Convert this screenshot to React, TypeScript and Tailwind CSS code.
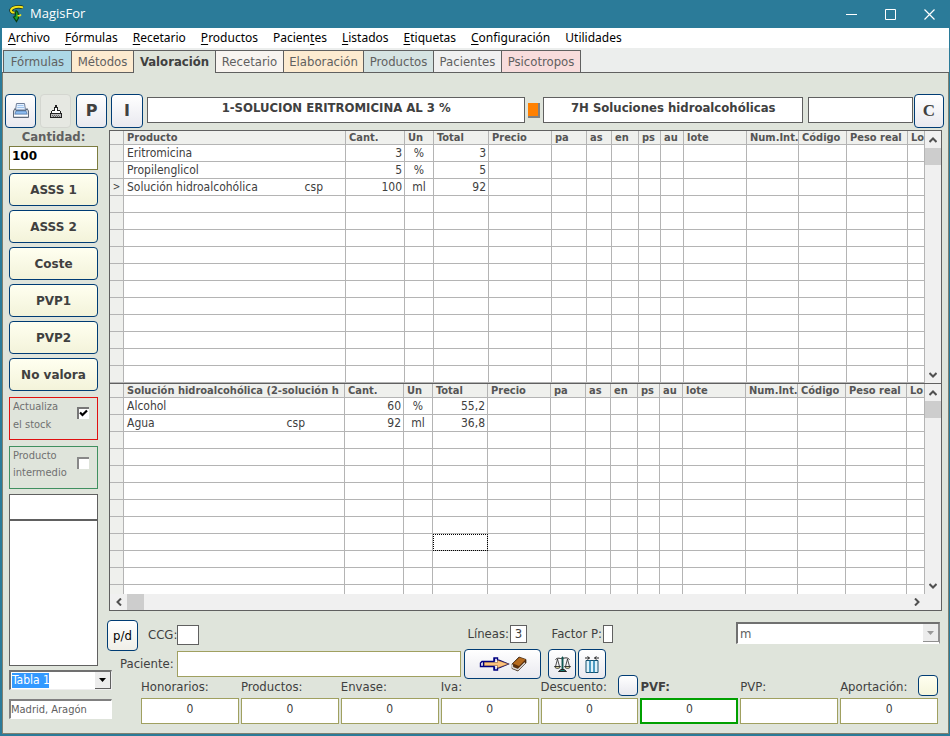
import React from "react";

type Line = { mark?: string; name: string; csp?: boolean; cant: string; un: string; total: string };

const menus = [
    ["", "A", "rchivo"],
    ["", "F", "órmulas"],
    ["", "R", "ecetario"],
    ["", "P", "roductos"],
    ["Pacien", "t", "es"],
    ["", "L", "istados"],
    ["", "E", "tiquetas"],
    ["", "C", "onfiguración"],
    ["Utilidades", "", ""],
];

const tabs = [
    { name: "Fórmulas", style: "w-[69px] border-l bg-[#add8e6]" },
    { name: "Métodos", style: "w-[62px] bg-[#fdebd0]" },
    { name: "Valoración", style: "w-[82px] bg-[#dfe4db] font-bold text-[#404040]", active: true },
    { name: "Recetario", style: "w-[68px] bg-[#f8f4f0]" },
    { name: "Elaboración", style: "w-[80px] bg-[#fdebd0]" },
    { name: "Productos", style: "w-[70px] bg-[#d5e3e2]" },
    { name: "Pacientes", style: "w-[68px] bg-[#f0f0f0]" },
    { name: "Psicotropos", style: "w-[79px] bg-[#f8dcdc]" },
];

const columns = [
    { name: "Cant.", width: "w-[59px]" },
    { name: "Un", width: "w-[29px]" },
    { name: "Total", width: "w-[55px]" },
    { name: "Precio", width: "w-[63px]" },
    { name: "pa", width: "w-[35px]" },
    { name: "as", width: "w-[25px]" },
    { name: "en", width: "w-[27px]" },
    { name: "ps", width: "w-[22px]" },
    { name: "au", width: "w-[23px]" },
    { name: "lote", width: "w-[63px]" },
    { name: "Num.Int.", width: "w-[52px]" },
    { name: "Código", width: "w-[48px]" },
    { name: "Peso real", width: "w-[61px]" },
    { name: "Lo", width: "" },
];

const formulaLines: Line[] = [
    { name: "Eritromicina", cant: "3", un: "%", total: "3" },
    { name: "Propilenglicol", cant: "5", un: "%", total: "5" },
    { mark: ">", name: "Solución hidroalcohólica", csp: true, cant: "100", un: "ml", total: "92" },
];

const baseLines: Line[] = [
    { name: "Alcohol", cant: "60", un: "%", total: "55,2" },
    { name: "Agua", csp: true, cant: "92", un: "ml", total: "36,8" },
];

const actions = ["ASSS 1", "ASSS 2", "Coste", "PVP1", "PVP2", "No valora"];

const totals = [
    { name: "Honorarios:", value: "0" },
    { name: "Productos:", value: "0" },
    { name: "Envase:", value: "0" },
    { name: "Iva:", value: "0" },
    { name: "Descuento:", value: "0", button: "from-white to-[#e8e8ee]" },
    { name: "PVF:", value: "0", strong: true },
    { name: "PVP:", value: "" },
    { name: "Aportación:", value: "0", button: "from-[#fffff0] to-[#f5f5dc]" },
];

const toolButton = "flex items-center justify-center rounded-[4px] border border-[#003c74] bg-linear-to-b from-white to-[#e9e9ef]";
const cell = "border-r border-b border-[#b4b4b4] p-0";
const headCell = "overflow-hidden pt-px pl-[3px] whitespace-nowrap";

const Chevron = ({ d }: { d: string }) => (
    <svg width="8" height="8" viewBox="0 0 8 8" fill="none" stroke="#505050" strokeWidth="2">
        <path d={d} />
    </svg>
);

const Logo = () => (
    <svg width="17" height="18" viewBox="0 0 17 18" fill="none">
        <path d="M15 2.500C11 1 4 2 3 5c-.2 2 1.500 2.800 3.500 2.500" stroke="#1b2a10" strokeWidth="3.400" />
        <path d="M8 5.500c3 1 2 4 2.500 7.500l-2 3.500-3-4.500 1.500-.5z" fill="#19a32c" stroke="#0b3f12" strokeWidth="1.200" />
        <path d="M15 2.500C11 1 4 2 3 5c-.2 2 1.500 2.800 3.500 2.500" stroke="#f2e51c" strokeWidth="2" />
        <path d="M13 9.500c-1 1.500-2 1.500-3.500 1" stroke="#f2e51c" strokeWidth="1.500" />
    </svg>
);

const PrinterIcon = () => (
    <svg width="18" height="18" viewBox="0 0 18 18">
        <path d="M4.500 1.500h8l1 6.500h-10z" fill="#e4f0ff" stroke="#6f7f9a" />
        <path d="M5.500 3.500h6M5.300 5.500h7" stroke="#9fc4ee" />
        <path d="M3 6.500 1.500 9v6.500h15V9L15 6.500l-1 2H4z" fill="#cfd6df" stroke="#5f6a7a" />
        <path d="M4 9h10l1 3H3z" fill="#8ebdf0" stroke="#4d78b0" strokeWidth=".7" />
        <path d="M2 13.500h14" stroke="#fff" />
    </svg>
);

const LoadIcon = () => (
    <svg width="14" height="15" viewBox="0 0 14 15" shapeRendering="crispEdges">
        <path d="M5.500 3.500h1v-2h1v2h1v3h2l2 3h-11l2-3h2z" fill="#fff" stroke="#222" />
        <path d="M1.500 9.500h11v4h-11z" fill="#b8b8b8" stroke="#222" />
        <path d="M3 11.500h8M4 12.500h8" stroke="#666" strokeDasharray="1 1" />
    </svg>
);

const TransferIcon = () => (
    <svg width="48" height="18" viewBox="0 0 48 18">
        <path d="M1.500 8 3 6.500h12V3h3.500v2l2 .5L29 9l-8.500 3.500-2 .5v2H15v-3.500H1.500z" fill="#fff" stroke="#000080" strokeWidth="1.400" />
        <path d="M5 7.500h13.500V5.200L29.500 9 18.500 13v-2.500H5z" fill="#fdc27c" stroke="#704020" strokeWidth=".5" />
        <path d="M4.500 7v4M15.500 3v3.500M15.500 11.500V15" stroke="#000080" strokeWidth="1.400" />
        <path d="m33 9 7-7 7 2.500v3.500l-8 8-6-2.500z" fill="#5a300c" stroke="#2d1a08" strokeWidth=".7" />
        <path d="m34 8.500 6.500-6 6 2L40 11z" fill="#b56b1e" />
        <path d="M33.500 9.500c-1 2 0 3 1 3.500l4.500 1.700 7-7" fill="none" stroke="#d8d8d8" strokeWidth="1.500" />
    </svg>
);

const ScaleIcon = () => (
    <svg width="17" height="17" viewBox="0 0 17 17" fill="none" stroke="#222">
        <path d="M1.500 3.500C4 1 6 3 8.500 2.500S13 1 15.500 3.500" />
        <path d="M3.500 3 1.500 10.500M3.500 3l2 7.500M13.500 3l-2 7.500M13.500 3l2 7.500" strokeWidth=".8" />
        <path d="M.5 10.500h6c-1 2.500-5 2.500-6 0zM10.500 10.500h6c-1 2.500-5 2.500-6 0z" fill="#eee9a8" strokeWidth=".9" />
        <path d="M8 1h1v13H8z" fill="#137a72" stroke="#0d4a46" strokeWidth=".9" />
        <path d="M4.500 15.500h8l-2.500-2H7z" fill="#137a72" />
    </svg>
);

const ColumnsIcon = () => (
    <svg width="16" height="17" viewBox="0 0 16 17" fill="none">
        <path d="M2 4.500h12v12H2z" fill="#dff3fb" stroke="#14506e" />
        <path d="M6 4.500v12M10 4.500v12" stroke="#1d7fae" strokeWidth="1.500" />
        <path d="M1 2h4.500M15 2h-4.500M3.500.5 5.500 2l-2 1.500M12.500.5l-2 1.500 2 1.500" stroke="#222" />
    </svg>
);

const VerticalBar = () => (
    <div className="flex w-4 shrink-0 flex-col items-center bg-[#f0f0f0]">
        <button aria-label="Subir" className="flex h-[17px] w-full items-center justify-center">
            <Chevron d="M.5 6L4 2.500L7.500 6" />
        </button>
        <div className="h-[17px] w-full bg-[#cdcdcd]" />
        <button aria-label="Bajar" className="mt-auto flex h-[17px] w-full items-center justify-center">
            <Chevron d="M.5 2L4 5.500L7.500 2" />
        </button>
    </div>
);

type GridProps = {
    title: string;
    titleWidth: string;
    cspPad: string;
    lines: Line[];
    rows: number;
    focusRow?: number;
};

const LinesTable: React.FC<GridProps> = ({ title, titleWidth, cspPad, lines, rows, focusRow }) => (
    <table className="w-full table-fixed border-separate border-spacing-0 text-[12px] leading-4 text-[#404040]">
        <thead>
            <tr className="h-[14px] bg-[#eff0ed] text-left text-[11px] leading-3 text-[#555]">
                <th className={`${cell} w-[14px]`}></th>
                <th className={`${cell} ${headCell} ${titleWidth}`}>{title}</th>
                {columns.map((col) => (
                    <th key={col.name} className={`${cell} ${headCell} ${col.width}`}>
                        {col.name}
                    </th>
                ))}
            </tr>
        </thead>
        <tbody>
            {Array.from({ length: rows }, (_, i) => {
                const line = lines[i];
                return (
                    <tr key={i} className="h-[17px] bg-white">
                        <td className={`${cell} bg-[#eff0ed] text-center text-[10px]`}>{line?.mark}</td>
                        <td className={`${cell} pl-[3px]`}>
                            {line && (
                                <div className={`flex justify-between ${cspPad}`}>
                                    <span>{line.name}</span>
                                    {line.csp && <span>csp</span>}
                                </div>
                            )}
                        </td>
                        <td className={`${cell} pr-[2px] text-right`}>{line?.cant}</td>
                        <td className={`${cell} text-center`}>{line?.un}</td>
                        <td
                            className={`${cell} pr-[2px] text-right ${focusRow === i ? "outline-1 -outline-offset-1 outline-dotted outline-black" : ""}`}
                        >
                            {line?.total}
                        </td>
                        {columns.slice(3).map((col) => (
                            <td key={col.name} className={cell}></td>
                        ))}
                    </tr>
                );
            })}
        </tbody>
    </table>
);

const Sidebar = () => (
    <aside className="flex w-[98px] shrink-0 flex-col">
        <label htmlFor="cantidad" className="w-[89px] text-center text-[13px] leading-[18px] font-bold text-[#606060]">
            Cantidad:
        </label>
        <input
            id="cantidad"
            defaultValue="100"
            className="h-6 w-[89px] border border-[#7c7c40] bg-white px-[2px] pb-1 font-[DejaVu_Sans] text-[12px] font-bold text-black"
        />
        <div className="mt-[3px] flex w-[89px] flex-col gap-1">
            {actions.map((name) => (
                <button
                    key={name}
                    className="h-[33px] rounded-[4px] border border-[#003c74] bg-linear-to-b from-[#fffff0] to-[#f3f3da] font-[DejaVu_Sans] text-[12px] font-bold text-[#404040]"
                >
                    {name}
                </button>
            ))}
        </div>
        <label className="mt-[6px] flex h-[43px] w-[89px] justify-between border border-[#e01010] pr-[8px] pl-[3px] text-[11px] leading-[18px] text-[#707070]">
            <span>Actualiza<br />el stock</span>
            <span className="relative mt-[9px] size-[12px]">
                <input type="checkbox" defaultChecked className="block size-[12px] appearance-none border-t-2 border-l-2 border-[#777] bg-white" />
                <svg className="pointer-events-none absolute top-[2px] left-[2px]" width="9" height="9" viewBox="0 0 9 9">
                    <path d="M1 3.500 3.500 6 8 1.500" fill="none" stroke="#000" strokeWidth="2.200" />
                </svg>
            </span>
        </label>
        <label className="mt-[6px] flex h-[43px] w-[89px] justify-between border border-[#409060] pr-[8px] pl-[3px] text-[11px] leading-[17px] text-[#707070]">
            <span>Producto<br />intermedio</span>
            <input type="checkbox" className="mt-[10px] size-[12px] appearance-none border-t-2 border-l-2 border-[#888] bg-white" />
        </label>
        <input aria-label="Código" className="mt-[5px] h-[26px] w-[89px] border border-[#606060] bg-white px-1 text-[12px]" />
        <textarea aria-label="Notas" className="h-[146px] w-[89px] resize-none border border-[#606060] bg-white" />
        <div className="mt-1 flex h-[20px] w-[103px] items-center border-t-2 border-r border-b border-l-2 border-t-[#707070] border-r-[#eee] border-b-[#eee] border-l-[#707070] bg-white pl-[1px]">
            <select aria-label="Tabla" className="h-[15px] w-[37px] appearance-none bg-[#3399ff] p-0 text-[12px] leading-[15px] text-white">
                <option>Tabla 1</option>
            </select>
            <span className="ml-auto flex h-full w-4 items-center justify-center border-r border-b border-[#606060] bg-[#ececec]">
                <svg width="7" height="4" viewBox="0 0 7 4"><path d="M0 0h7L3.500 4z" /></svg>
            </span>
        </div>
        <input
            aria-label="Provincia"
            defaultValue="Madrid, Aragón"
            className="mt-[9px] h-[20px] w-[103px] border-t-2 border-r border-b border-l-2 border-t-[#808080] border-r-white border-b-white border-l-[#808080] bg-white text-[11px] text-[#606060]"
        />
    </aside>
);

const Footer = () => (
    <footer className="mr-[8px] text-[13px] text-[#404040]">
        <div className="flex h-[29px] items-start pt-[5px]">
            <button className="-mt-[5px] mr-[10px] h-[31px] w-[31px] shrink-0 rounded-[4px] border border-[#003c74] bg-linear-to-b from-white to-[#f0efe8] text-[13px] text-black">
                p/d
            </button>
            <label htmlFor="ccg" className="w-[29px] leading-5">CCG:</label>
            <input id="ccg" className="h-5 w-[22px] border border-[#606060] bg-white" />
            <label htmlFor="lineas" className="ml-auto pr-px leading-[18px]">Líneas:</label>
            <input id="lineas" defaultValue="3" className="h-[18px] w-[17px] border border-[#606060] bg-white text-center" />
            <label htmlFor="factor" className="w-[76px] pr-px text-right leading-[18px]">Factor P:</label>
            <input id="factor" className="h-[18px] w-[10px] border border-[#606060] bg-white" />
            <div className="relative -mt-[3px] ml-[123px] w-[204px]">
                <select
                    aria-label="Unidad"
                    className="block h-[22px] w-full appearance-none border-t-2 border-r border-b border-l-2 border-t-[#707070] border-r-[#909090] border-b-white border-l-[#707070] bg-white pb-px pl-[2px] text-[#606060]"
                >
                    <option>m</option>
                </select>
                <span className="pointer-events-none absolute top-[2px] right-px flex h-[18px] w-4 items-center justify-center border-r border-b border-[#909090] bg-[#ececec]">
                    <svg width="7" height="4" viewBox="0 0 7 4" fill="#999"><path d="M0 0h7L3.500 4z" /></svg>
                </span>
            </div>
        </div>
        <div className="flex h-[30px] items-center pl-[13px]">
            <label htmlFor="paciente" className="w-[57px] shrink-0">Paciente:</label>
            <input id="paciente" className="h-[26px] flex-1 border border-[#a0a060] bg-white px-1" />
            <button aria-label="Traspasar" className={`${toolButton} ml-[3px] h-[30px] w-[77px]`}><TransferIcon /></button>
            <button aria-label="Pesar" className={`${toolButton} ml-[7px] h-[30px] w-7`}><ScaleIcon /></button>
            <button aria-label="Columnas" className={`${toolButton} mr-[334px] ml-[2px] h-[30px] w-7`}><ColumnsIcon /></button>
        </div>
        <div className="mr-[2px] ml-[34px] grid grid-cols-8 gap-x-[2px]">
            {totals.map((t) => (
                <div key={t.name}>
                    <div className="flex h-[19px] items-end justify-between pb-[2px]">
                        <label
                            htmlFor={t.name}
                            className={t.strong ? "leading-[18px] font-bold" : "leading-[18px]"}
                        >
                            {t.name}
                        </label>
                        {t.button && (
                            <button
                                aria-label={`Editar ${t.name}`}
                                className={`h-[21px] w-[20px] shrink-0 rounded-[4px] border border-[#003c74] bg-linear-to-b ${t.button}`}
                            />
                        )}
                    </div>
                    <input
                        id={t.name}
                        defaultValue={t.value}
                        className={`block h-[26px] w-full bg-white pb-[5px] text-center text-[12px] ${t.strong ? "border-2 border-[#00a000]" : "border border-[#a0a060]"}`}
                    />
                </div>
            ))}
        </div>
    </footer>
);

const App: React.FC = () => {
    return (
        <div className="flex min-h-screen flex-col border-r border-b-2 border-l-2 border-[#2b7b99] bg-[#dfe4db] font-['DejaVu_Sans_Condensed','DejaVu_Sans',sans-serif]">
            <header className="flex h-7 items-center bg-[#2b7b99] pl-[6px] font-['Open_Sans','Noto_Sans',sans-serif] text-[13px] text-white">
                <Logo />
                <span className="ml-[5px]">MagisFor</span>
                <div className="ml-auto flex">
                    <button aria-label="Minimizar" className="w-[39px]">
                        <svg width="11" height="11" className="mx-auto" stroke="#fff"><path d="M0 5.500h11" /></svg>
                    </button>
                    <button aria-label="Maximizar" className="w-[39px]">
                        <svg width="11" height="11" className="mx-auto" stroke="#fff" fill="none"><path d="M.5.5h10v10H.5z" /></svg>
                    </button>
                    <button aria-label="Cerrar" className="w-[39px]">
                        <svg width="11" height="11" className="mx-auto" stroke="#fff" strokeWidth="1.200"><path d="M.5.5l10 10M10.500.5l-10 10" /></svg>
                    </button>
                </div>
            </header>
            <nav className="flex h-5 items-center gap-[15px] bg-white pl-[6px] font-['Noto_Sans',sans-serif] text-[12px] text-black">
                {menus.map(([before, key, after]) => (
                    <button key={before + key + after}>
                        {before}
                        <span className="underline underline-offset-2">{key}</span>
                        {after}
                    </button>
                ))}
            </nav>
            <div className="flex h-[25px] items-end border-b border-[#606060] bg-[#eceeed] pl-px">
                {tabs.map((tab) => (
                    <button
                        key={tab.name}
                        className={`${tab.style} ${tab.active ? "-mb-px h-[23px] pb-px" : "h-[22px] text-[#606060]"} border-t border-r border-[#606060] text-[13px]`}
                    >
                        {tab.name}
                    </button>
                ))}
            </div>
            <main className="flex-1 border-x border-b border-[#808070] pb-[8px]">
                <div className="flex items-start pt-[21px] pr-1 pl-[2px] text-[12px] font-bold text-[#404040]">
                    <button aria-label="Imprimir" className={`${toolButton} h-[34px] w-[31px]`}><PrinterIcon /></button>
                    <button aria-label="Cargar" className="ml-1 flex h-[34px] w-[31px] items-center justify-center rounded-[4px] border border-[#d4d6d0] bg-[#e6e8e2]"><LoadIcon /></button>
                    <button className={`${toolButton} ml-[5px] h-[34px] w-[31px] font-[DejaVu_Sans] text-[16px]`}>P</button>
                    <button className={`${toolButton} ml-1 h-[34px] w-8 font-[DejaVu_Sans] text-[16px]`}>I</button>
                    <input
                        aria-label="Fórmula"
                        defaultValue="1-SOLUCION ERITROMICINA AL 3 %"
                        className="mt-[3px] ml-1 h-[26px] min-w-0 flex-[380] border border-[#606060] bg-white pb-[6px] text-center text-[13px]"
                    />
                    <button aria-label="Marcar" className="mt-[9px] ml-[3px] h-[15px] w-3 border-r-2 border-b-2 border-[#808080] bg-[#ff8000]" />
                    <input
                        aria-label="Tipo"
                        defaultValue="7H Soluciones hidroalcohólicas"
                        className="mt-[3px] ml-[3px] h-[26px] min-w-0 flex-[260] border border-[#606060] bg-white pb-[6px] text-center text-[13px]"
                    />
                    <input aria-label="Referencia" className="mt-[3px] ml-[5px] h-[26px] min-w-0 flex-[104] border border-[#606060] bg-white" />
                    <button className={`${toolButton} ml-px h-[34px] w-[30px] font-['Liberation_Serif','Noto_Sans',serif] text-[17px]`}>C</button>
                </div>
                <div className="flex pl-[6px]">
                    <Sidebar />
                    <div className="min-w-0 flex-1">
                        <section className="mt-[2px] mr-[6px] mb-[9px] ml-[2px] border border-[#606060] bg-[#f0f0f0]">
                            <div className="flex h-[253px] overflow-hidden border-b border-[#606060]">
                                <div className="min-w-0 flex-1">
                                    <LinesTable title="Producto" titleWidth="w-[222px]" cspPad="pr-[22px]" lines={formulaLines} rows={14} />
                                </div>
                                <VerticalBar />
                            </div>
                            <div className="flex h-[210px] overflow-hidden">
                                <div className="min-w-0 flex-1">
                                    <LinesTable
                                        title="Solución hidroalcohólica (2-solución h"
                                        titleWidth="w-[221px]"
                                        cspPad="pr-[39px]"
                                        lines={baseLines}
                                        rows={12}
                                        focusRow={8}
                                    />
                                </div>
                                <VerticalBar />
                            </div>
                            <div className="flex h-4 items-center pr-4">
                                <button aria-label="Izquierda" className="flex h-full w-[17px] items-center justify-center">
                                    <Chevron d="M6 .5L2.500 4L6 7.500" />
                                </button>
                                <div className="h-4 w-[17px] bg-[#cdcdcd]" />
                                <button aria-label="Derecha" className="ml-auto flex h-full w-[17px] items-center justify-center">
                                    <Chevron d="M2 .5l3.500 3.500L2 7.500" />
                                </button>
                            </div>
                        </section>
                        <Footer />
                    </div>
                </div>
            </main>
        </div>
    );
};

export default App;
